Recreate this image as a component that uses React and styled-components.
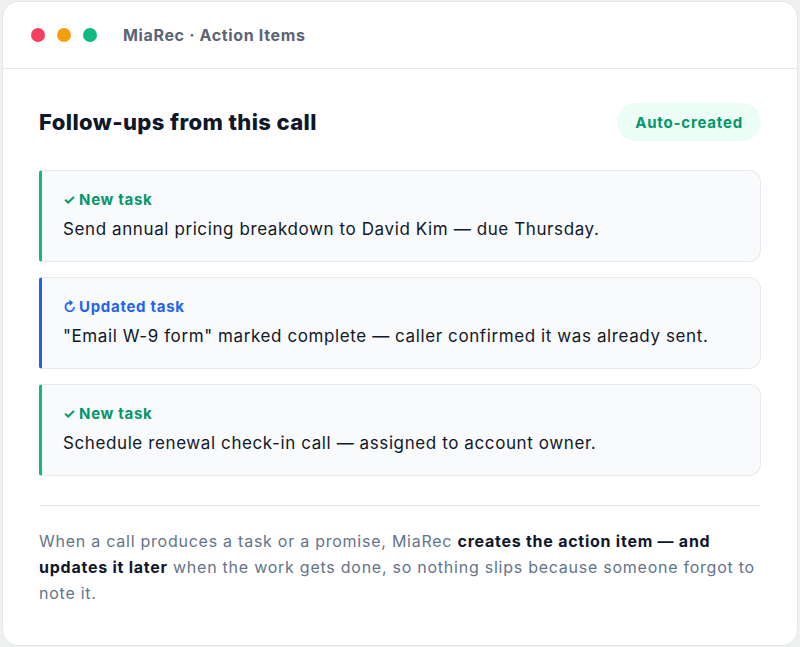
import React from 'react';
import styled, { createGlobalStyle } from 'styled-components';

const GlobalStyle = createGlobalStyle`
  html, body {
    margin: 0;
    padding: 0;
    background: #eef1f0;
  }
  body {
    font-family: Inter, "Noto Sans", sans-serif;
  }
`;

const tones = {
  green: { bar: '#10b981', label: '#059669' },
  blue: { bar: '#2563eb', label: '#2563eb' },
};

const items = [
  { tone: 'green', icon: '✓', label: 'New task', text: 'Send annual pricing breakdown to David Kim — due Thursday.' },
  { tone: 'blue', icon: '↻', label: 'Updated task', text: '"Email W-9 form" marked complete — caller confirmed it was already sent.' },
  { tone: 'green', icon: '✓', label: 'New task', text: 'Schedule renewal check-in call — assigned to account owner.' },
];

function App() {
  return (
    <>
      <GlobalStyle />
      <Window>
        <TitleBar>
          <Dots>
            <Dot color="#f43f5e" />
            <Dot color="#f59e0b" />
            <Dot color="#10b981" />
          </Dots>
          <WindowTitle>MiaRec · Action Items</WindowTitle>
        </TitleBar>
        <Body>
          <HeadRow>
            <Heading>Follow-ups from this call</Heading>
            <Badge>Auto-created</Badge>
          </HeadRow>
          <List>
            {items.map((item, i) => (
              <Card key={i} tone={item.tone}>
                <Label tone={item.tone}>
                  <Glyph>{item.icon}</Glyph>{item.label}
                </Label>
                <CardText>{item.text}</CardText>
              </Card>
            ))}
          </List>
          <Divider />
          <Note>
            When a call produces a task or a promise, MiaRec <strong>creates the action item — and</strong>{' '}
            <strong>updates it later</strong> when the work gets done, so nothing slips because someone forgot to note it.
          </Note>
        </Body>
      </Window>
    </>
  );
}

const Window = styled.div`
  box-sizing: border-box;
  margin: 1px 2px;
  height: 645px;
  background: #ffffff;
  border: 1px solid #e3e7ea;
  border-radius: 16px;
  overflow: hidden;
  display: flex;
  flex-direction: column;
`;

const TitleBar = styled.div`
  height: 67px;
  box-sizing: border-box;
  border-bottom: 1px solid #e5e9ec;
  display: flex;
  align-items: center;
  padding: 0 0 0 28px;
  gap: 26px;
`;

const Dots = styled.div`
  display: flex;
  gap: 12px;
`;

const Dot = styled.span`
  width: 14px;
  height: 14px;
  border-radius: 50%;
  background: ${(p) => p.color};
`;

const WindowTitle = styled.div`
  font-size: 16px;
  font-weight: 700;
  color: #5b6477;
  letter-spacing: 0.65px;
`;

const Body = styled.div`
  padding: 34px 36px 0 36px;
  display: flex;
  flex-direction: column;
`;

const HeadRow = styled.div`
  display: flex;
  align-items: center;
  justify-content: space-between;
`;

const Heading = styled.h1`
  margin: 0;
  font-size: 22px;
  font-weight: 800;
  color: #0f172a;
  letter-spacing: 0.4px;
`;

const Badge = styled.div`
  background: #ecfdf5;
  color: #059669;
  font-weight: 700;
  font-size: 15px;
  letter-spacing: 0.8px;
  padding: 0 18px;
  height: 38px;
  display: flex;
  align-items: center;
  border-radius: 999px;
`;

const List = styled.div`
  margin-top: 29px;
  display: flex;
  flex-direction: column;
  gap: 15px;
`;

const Card = styled.div`
  box-sizing: border-box;
  height: 92px;
  background: #f8fafc;
  border: 1px solid #e6e9ee;
  border-left: 3px solid ${(p) => tones[p.tone].bar};
  border-radius: 3px 12px 12px 3px;
  padding: 19px 20px 0 21px;
  display: flex;
  flex-direction: column;
  gap: 10px;
`;

const Label = styled.div`
  font-size: 15px;
  font-weight: 700;
  letter-spacing: 0.7px;
  color: ${(p) => tones[p.tone].label};
`;

const Glyph = styled.span`
  display: inline-block;
  width: 16px;
  font-size: 14px;
  letter-spacing: 0;
`;

const CardText = styled.div`
  font-size: 17px;
  color: #111827;
  letter-spacing: 0.6px;
`;

const Divider = styled.div`
  margin-top: 29px;
  height: 1px;
  background: #e5e7eb;
`;

const Note = styled.p`
  margin: 22px 0 0;
  font-size: 16px;
  line-height: 26px;
  color: #64748b;
  letter-spacing: 0.75px;
  strong {
    color: #0f172a;
    font-weight: 700;
  }
`;

export default App;
